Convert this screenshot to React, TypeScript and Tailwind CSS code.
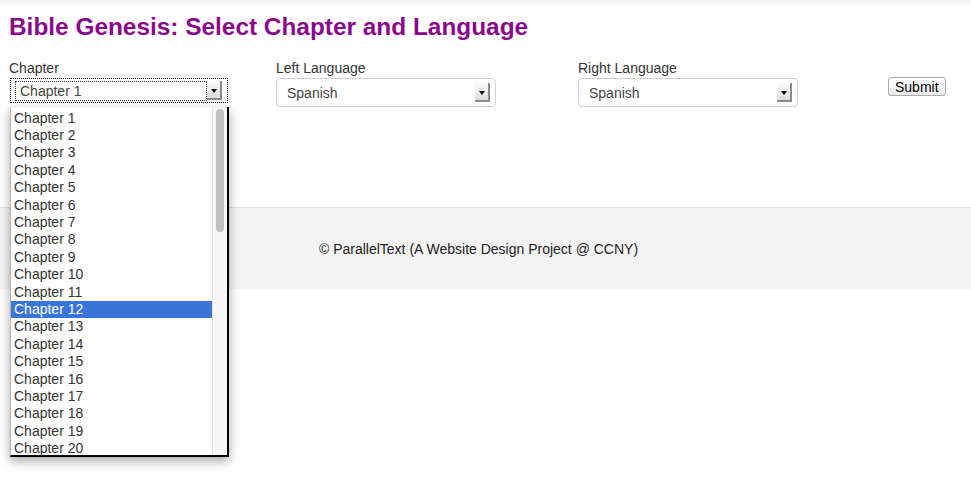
import React from "react";

/* ================= DATA ================= */

const chapters = Array.from({ length: 20 }, (_, i) => `Chapter ${i + 1}`);

/* ================= PARTS ================= */

function ArrowButton() {
  return (
    <div className="flex h-[19px] w-[15px] items-center justify-center border-r-2 border-b-2 border-[#8a8a8a] bg-gradient-to-b from-[#fdfdfd] to-[#dcdcdc]">
      <div className="mt-[2px] h-0 w-0 border-x-[3px] border-t-[4px] border-x-transparent border-t-black" />
    </div>
  );
}

function LangSelect({ value }: { value: string }) {
  return (
    <div className="flex h-[29px] w-[220px] items-center justify-between rounded-[4px] border border-[#cfcfcf] bg-white pl-[10px] pr-[5px]">
      <span className="text-[14px] text-[#444]">{value}</span>
      <ArrowButton />
    </div>
  );
}

/* ================= COMPONENT ================= */

export default function App() {
  return (
    <div
      className="relative h-[477px] w-[971px] overflow-hidden bg-white text-[#333]"
      style={{ fontFamily: '"Liberation Sans", Arial, sans-serif' }}
    >
      <div className="absolute inset-x-0 top-0 h-[8px] bg-gradient-to-b from-[#f1f1f1] to-white" />

      <div className="relative px-[9px] pt-[13px]">
        <h1 className="text-[24.4px] leading-[28px] font-bold text-[#8b078b]">
          Bible Genesis: Select Chapter and Language
        </h1>

        <div className="mt-[19px] grid grid-cols-[267px_302px_310px_auto] text-[14px] leading-[16px]">
          <div>
            <div>Chapter</div>
            <div className="mt-[2px] ml-[1px] flex h-[25px] w-[218px] items-center border border-dotted border-black pl-[4px]">
              <div className="flex h-[20px] w-[192px] items-center border border-dotted border-[#333] pl-[4px] text-[#444]">
                Chapter 1
              </div>
              <ArrowButton />
            </div>
          </div>

          <div>
            <div>Left Language</div>
            <div className="mt-[2px]">
              <LangSelect value="Spanish" />
            </div>
          </div>

          <div>
            <div>Right Language</div>
            <div className="mt-[2px]">
              <LangSelect value="Spanish" />
            </div>
          </div>

          <div className="pt-[17px]">
            <button className="h-[19px] rounded-[3px] border border-[#a9a9a9] bg-gradient-to-b from-white to-[#ececec] px-[6px] text-[14px] leading-[16px] text-black">
              Submit
            </button>
          </div>
        </div>
      </div>

      <footer className="mt-[100px] flex h-[82px] items-center justify-center border-t border-[#e3e3e3] bg-[#f4f4f4] pr-[14px] pt-[2px] text-[14px] text-[#222]">
        © ParallelText (A Website Design Project @ CCNY)
      </footer>

      {/* open dropdown list */}
      <div className="absolute top-[107px] left-[10px] flex h-[350px] w-[219px] border-l border-[#b5b5b5] border-r-2 border-b-2 border-r-black border-b-black bg-white shadow-[0_4px_10px_rgba(0,0,0,0.35)]">
        <ul className="flex-1 pt-[2.5px] text-[14px] leading-[17.4px] text-[#333]">
          {chapters.map((c) => (
            <li
              key={c}
              className={
                c === "Chapter 12"
                  ? "bg-[#3875d7] pl-[3px] text-white"
                  : "pl-[3px]"
              }
            >
              {c}
            </li>
          ))}
        </ul>
        <div className="flex w-[15px] justify-center border-l border-[#e6e6e6] bg-[#f7f7f7] pt-[2px]">
          <div className="h-[123px] w-[8px] rounded-full bg-[#c1c1c1]" />
        </div>
      </div>
    </div>
  );
}
